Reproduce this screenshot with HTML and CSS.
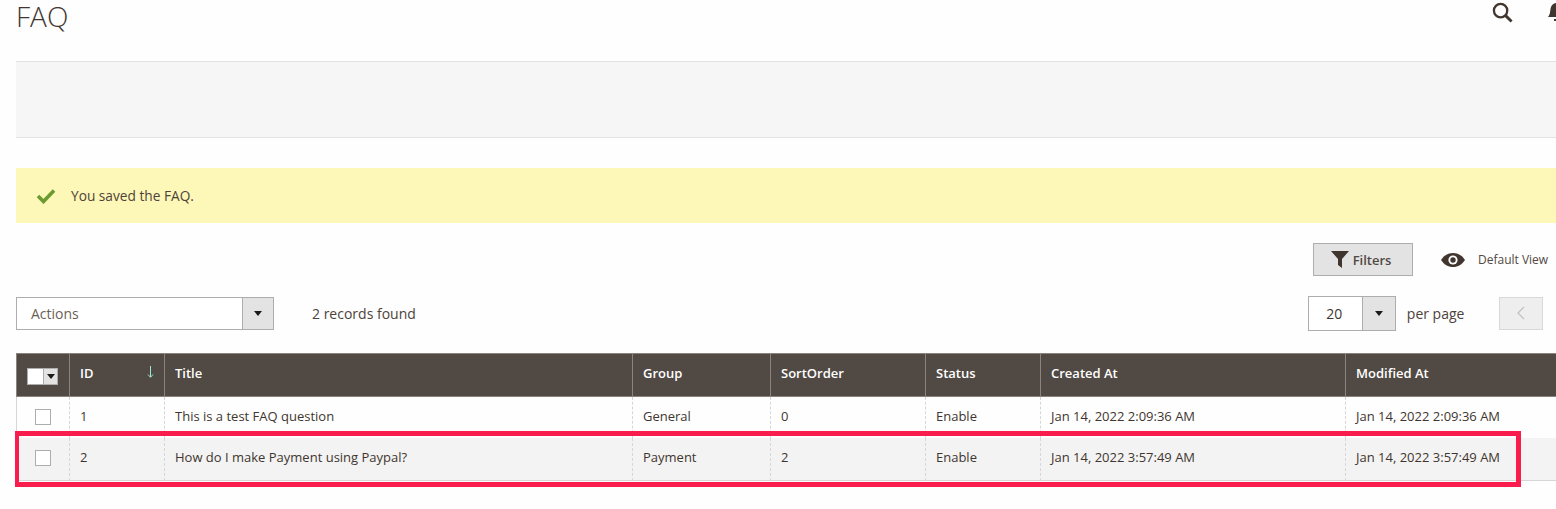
FILE: index.html
```html
<!DOCTYPE html>
<html lang="en">
<head>
<meta charset="utf-8">
<title>FAQ</title>
<link rel="stylesheet" href="styles.css">
</head>
<body>
<div class="page">
  <header class="page-header">
    <h1 class="page-title">FAQ</h1>
    <div class="header-actions">
      <svg class="icon-search" viewBox="0 0 22 22" width="21" height="21"><circle cx="9" cy="9" r="7" fill="none" stroke="#41362f" stroke-width="2.4"/><path d="M14 14l6.500 6.500" stroke="#41362f" stroke-width="3" fill="none"/></svg>
      <svg class="icon-bell" viewBox="0 0 20 20" width="20" height="20"><path d="M0 15c2-2 2-5 2.500-8C3 3 6 1 9 1s6 2 6.500 6c.5 3 .5 6 2.500 8z" fill="#41362f"/><path d="M6 17h6v2H6z" fill="#41362f"/></svg>
    </div>
  </header>
  <div class="actions-band"></div>
  <div class="message">
    <svg class="icon-check" viewBox="0 0 20 16" width="20" height="16"><path d="M2 8l5.500 5.500L18 2.500" fill="none" stroke="#6b9a2f" stroke-width="3.600"/></svg>
    <span>You saved the FAQ.</span>
  </div>
  <div class="view-row">
    <button class="filters-btn" type="button">
      <svg viewBox="0 0 18 17" width="18" height="17"><path d="M0 0h18l-7 8v9l-4-3V8z" fill="#41362f"/></svg>
      Filters
    </button>
    <div class="default-view">
      <svg viewBox="0 0 24 14" width="24" height="14"><path d="M0 7C3 2.500 7 0 12 0s9 2.500 12 7c-3 4.500-7 7-12 7S3 11.500 0 7z" fill="#41362f"/><circle cx="12" cy="7" r="4.600" fill="#fff"/><circle cx="12" cy="7" r="2.700" fill="#41362f"/></svg>
      <span>Default View</span>
    </div>
  </div>
  <div class="pager-row">
    <div class="actions-select">
      <span class="select-value">Actions</span>
      <span class="select-arrow"><i class="caret"></i></span>
    </div>
    <span class="records">2 records found</span>
    <div class="pager">
      <div class="per-page-select">
        <span class="per-page-value">20</span>
        <span class="select-arrow select-arrow-wide"><i class="caret"></i></span>
      </div>
      <span class="per-page-label">per page</span>
      <button class="prev-btn" type="button" aria-label="Previous">
        <svg viewBox="0 0 8 14" width="8" height="14"><path d="M7 1L1 7l6 6" fill="none" stroke="#c2c2c2" stroke-width="1.300"/></svg>
      </button>
    </div>
  </div>
  <table class="grid">
    <colgroup>
      <col class="c-check"><col class="c-id"><col class="c-title"><col class="c-group"><col class="c-sort"><col class="c-status"><col class="c-created"><col class="c-modified">
    </colgroup>
    <thead>
      <tr>
        <th><span class="mass-select"><span class="mass-box"></span><span class="mass-arrow"><i class="caret caret-small"></i></span></span></th>
        <th class="sorted">ID<svg class="sort-arrow" viewBox="0 0 7 12" width="7" height="12"><path d="M3.500 0v11M1 8.500l2.500 2.800L6 8.500" fill="none" stroke="#9fe3da" stroke-width="1"/></svg></th>
        <th>Title</th>
        <th>Group</th>
        <th>SortOrder</th>
        <th>Status</th>
        <th>Created At</th>
        <th>Modified At</th>
      </tr>
    </thead>
    <tbody>
      <tr>
        <td class="check-cell"><span class="checkbox"></span></td>
        <td>1</td>
        <td>This is a test FAQ question</td>
        <td>General</td>
        <td>0</td>
        <td>Enable</td>
        <td>Jan 14, 2022 2:09:36 AM</td>
        <td>Jan 14, 2022 2:09:36 AM</td>
      </tr>
      <tr class="row-alt">
        <td class="check-cell"><span class="checkbox"></span></td>
        <td>2</td>
        <td>How do I make Payment using Paypal?</td>
        <td>Payment</td>
        <td>2</td>
        <td>Enable</td>
        <td>Jan 14, 2022 3:57:49 AM</td>
        <td>Jan 14, 2022 3:57:49 AM</td>
      </tr>
    </tbody>
  </table>
  <div class="highlight"></div>
</div>
</body>
</html>
```
FILE: styles.css
```css
* { box-sizing: border-box; }
html, body { margin: 0; padding: 0; }
body {
  background: #fefefe;
  color: #41362f;
  font-family: "Open Sans", sans-serif;
  font-size: 13px;
  overflow: hidden;
}
.page {
  position: relative;
  width: 1640px;
  height: 509px;
  padding-left: 16px;
  overflow: hidden;
}
.page-header {
  display: flex;
  justify-content: space-between;
  width: 1552px;
  height: 61px;
}
.page-title {
  margin: 0;
  font-size: 28px;
  font-weight: 300;
  line-height: 32px;
  color: #41362f;
}
.header-actions {
  display: flex;
  gap: 35px;
  padding-top: 2px;
  height: 24px;
}
.actions-band {
  height: 77px;
  background: #f6f6f6;
  border-top: 1px solid #e3e3e3;
  border-bottom: 1px solid #e3e3e3;
}
.message {
  display: flex;
  align-items: center;
  gap: 15px;
  height: 55px;
  margin-top: 30px;
  padding-left: 20px;
  background: #fdf7b8;
  font-size: 13.700px;
  color: #4d4339;
}
.view-row {
  display: flex;
  align-items: center;
  height: 33px;
  margin-top: 20px;
  padding-left: 1297px;
}
.filters-btn {
  display: flex;
  align-items: center;
  justify-content: center;
  gap: 4px;
  width: 100px;
  height: 33px;
  padding: 0 4px 0 0;
  border: 1px solid #adadad;
  background: #e3e3e3;
  font-family: inherit;
  font-size: 13px;
  font-weight: 600;
  color: #514943;
}
.default-view {
  display: flex;
  align-items: center;
  gap: 13px;
  margin-left: 28px;
  font-size: 12px;
  color: #514943;
  white-space: nowrap;
}
.pager-row {
  display: flex;
  align-items: center;
  height: 34px;
  margin-top: 20px;
}
.actions-select {
  display: flex;
  width: 258px;
  height: 33px;
  border: 1px solid #adadad;
  background: #fff;
}
.select-value {
  flex: 1;
  padding-left: 14px;
  font-size: 14px;
  line-height: 31px;
  color: #6a5f55;
}
.select-arrow {
  display: flex;
  align-items: center;
  justify-content: center;
  width: 31px;
  background: #e3e3e3;
  border-left: 1px solid #adadad;
}
.select-arrow-wide { width: 33px; }
.caret {
  width: 0;
  height: 0;
  border-left: 4.500px solid transparent;
  border-right: 4.500px solid transparent;
  border-top: 5px solid #1f1a17;
}
.caret-small {
  border-left-width: 4px;
  border-right-width: 4px;
  border-top-width: 5px;
}
.records {
  margin-left: 38px;
  font-size: 14px;
  color: #4d4339;
}
.pager {
  display: flex;
  align-items: center;
  margin-left: 892px;
}
.per-page-select {
  display: flex;
  width: 88px;
  height: 35px;
  border: 1px solid #adadad;
  background: #fff;
}
.per-page-value {
  flex: 1;
  text-align: center;
  font-size: 14px;
  line-height: 33px;
  color: #41362f;
  padding-right: 2px;
}
.per-page-label {
  margin-left: 11px;
  font-size: 14px;
  color: #4d4339;
}
.prev-btn {
  display: flex;
  align-items: center;
  justify-content: center;
  width: 44px;
  height: 33px;
  margin-left: 35px;
  padding: 0;
  border: 1px solid #d8d8d8;
  background: #eeeeee;
}
.grid {
  width: 1620px;
  margin-top: 23px;
  border-collapse: separate;
  border-spacing: 0;
  table-layout: fixed;
}
.c-check { width: 53px; }
.c-id { width: 95px; }
.c-title { width: 468px; }
.c-group { width: 138px; }
.c-sort { width: 155px; }
.c-status { width: 115px; }
.c-created { width: 305px; }
.grid th {
  height: 44px;
  padding: 0 10px 4px;
  background: #514943;
  border-top: 1px solid #8a837e;
  border-bottom: 1px solid #8a837e;
  border-left: 1px solid #8a837e;
  color: #fff;
  font-size: 13px;
  font-weight: 600;
  text-align: left;
  position: relative;
}
.sort-arrow {
  position: absolute;
  right: 10px;
  top: 12px;
}
.mass-select {
  display: flex;
  width: 31px;
  height: 17px;
  border: 1px solid #adadad;
  background: #fff;
}
.grid th:first-child { padding: 2px 0 0 10px; }
.mass-box { width: 15px; }
.mass-arrow {
  display: flex;
  align-items: center;
  justify-content: center;
  flex: 1;
  background: #e3e3e3;
  border-left: 1px solid #adadad;
}
.grid td {
  height: 41px;
  padding: 0 10px 4px;
  border-left: 1px dashed #d6d6d6;
  font-size: 13px;
  color: #41362f;
  white-space: nowrap;
}
.grid td:first-child { border-left: 1px solid #d6d6d6; }
.grid .row-alt td {
  height: 43px;
  background: #f3f3f3;
  border-bottom: 1px solid #d6d6d6;
}
.grid .check-cell { padding: 0 0 2px 18px; }
.checkbox {
  display: block;
  width: 16px;
  height: 16px;
  background: #fff;
  border: 1px solid #adadad;
}
.highlight {
  position: absolute;
  left: 15px;
  top: 431px;
  width: 1506px;
  height: 56px;
  border-style: solid;
  border-color: #f91d4e;
  border-width: 5px 5px 5px 4px;
  pointer-events: none;
}
```
